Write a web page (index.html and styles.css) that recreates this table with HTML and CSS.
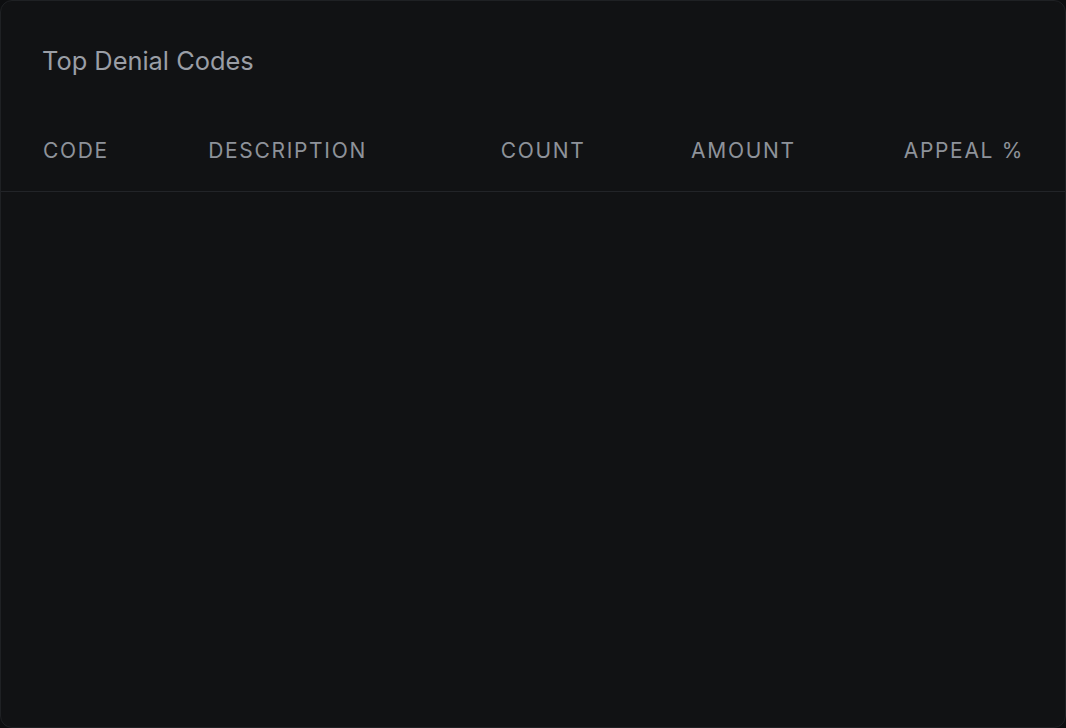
FILE: index.html
```html
<!DOCTYPE html>
<html lang="en">
<head>
<meta charset="utf-8">
<title>Top Denial Codes</title>
<link rel="stylesheet" href="styles.css">
</head>
<body>
<section class="card">
  <h2 class="card-title">Top Denial Codes</h2>
  <table class="denials">
    <colgroup>
      <col class="c-code">
      <col class="c-desc">
      <col class="c-count">
      <col class="c-amount">
      <col class="c-appeal">
    </colgroup>
    <thead>
      <tr>
        <th class="left">Code</th>
        <th class="left">Description</th>
        <th class="right">Count</th>
        <th class="right">Amount</th>
        <th class="right">Appeal %</th>
      </tr>
    </thead>
    <tbody></tbody>
  </table>
</section>
</body>
</html>
```
FILE: styles.css
```css
* { box-sizing: border-box; }
html, body {
  margin: 0;
  height: 100%;
  background: #0d0e10;
}
body {
  font-family: Inter, "Noto Sans", sans-serif;
}
.card {
  height: 728px;
  background: #111214;
  border: 1px solid #1f2124;
  border-radius: 12px;
  padding-top: 44px;
}
.card-title {
  margin: 0;
  padding: 0 41px;
  font-size: 25.4px;
  line-height: 32px;
  font-weight: 400;
  color: #9a9ea6;
}
.denials {
  width: 100%;
  table-layout: fixed;
  border-collapse: collapse;
  margin-top: 34px;
}
.c-code { width: 191px; }
.c-desc { width: 228px; }
.c-count { width: 181px; }
.c-amount { width: 210px; }
.c-appeal { width: 253px; }
.denials th {
  padding: 26px 16px;
  font-size: 21px;
  line-height: 28px;
  font-weight: 400;
  letter-spacing: 0.08em;
  text-transform: uppercase;
  color: #8e929a;
  border-bottom: 1px solid #222428;
  white-space: nowrap;
}
.denials th:first-child { padding-left: 42px; }
.denials th:last-child { padding-right: 41px; }
.left { text-align: left; }
.right { text-align: right; }
```
